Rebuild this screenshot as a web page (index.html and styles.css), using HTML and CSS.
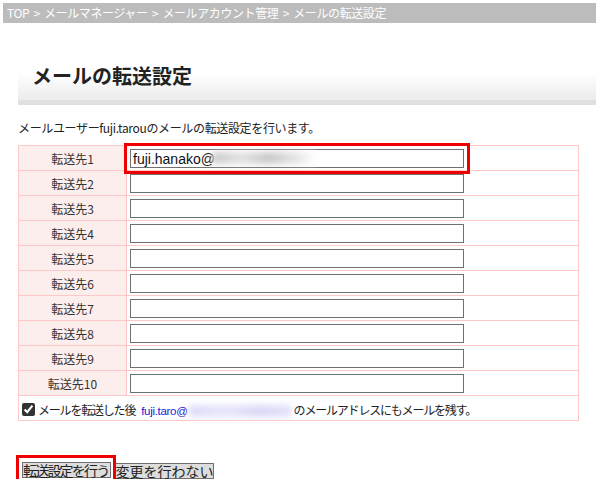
FILE: index.html
```html
<!DOCTYPE html>
<html lang="ja">
<head>
<meta charset="utf-8">
<title>メールの転送設定</title>
<link rel="stylesheet" href="styles.css">
</head>
<body>
<div class="crumb">TOP &gt; メールマネージャー &gt; メールアカウント管理 &gt; メールの転送設定</div>
<div class="head"><h1>メールの転送設定</h1></div>
<p class="desc">メールユーザーfuji.tarouのメールの転送設定を行います。</p>
<table class="fwd">
  <tr><th>転送先1</th><td><span class="hl"><input type="text" value="fuji.hanako@"><span class="blur gray"></span><span class="redbox"></span></span></td></tr>
  <tr><th>転送先2</th><td><input type="text"></td></tr>
  <tr><th>転送先3</th><td><input type="text"></td></tr>
  <tr><th>転送先4</th><td><input type="text"></td></tr>
  <tr><th>転送先5</th><td><input type="text"></td></tr>
  <tr><th>転送先6</th><td><input type="text"></td></tr>
  <tr><th>転送先7</th><td><input type="text"></td></tr>
  <tr><th>転送先8</th><td><input type="text"></td></tr>
  <tr><th>転送先9</th><td><input type="text"></td></tr>
  <tr><th>転送先10</th><td><input type="text"></td></tr>
  <tr><td colspan="2" class="keep"><input type="checkbox" checked><span class="keeptext">メールを転送した後<span class="addr">fuji.taro@</span><span class="blur blue"></span>のメールアドレスにもメールを残す。</span></td></tr>
</table>
<div class="btns">
  <span class="hl"><button type="button" class="go">転送設定を行う</button><span class="redbox"></span></span><button type="button">変更を行わない</button>
</div>
</body>
</html>
```
FILE: styles.css
```css
html, body { margin: 0; padding: 0; background: #fff; }
body { font-family: "Noto Sans CJK JP", "Noto Sans", sans-serif; color: #333; font-size: 12px; }
.crumb {
  margin: 3px 3px 0 3px;
  height: 20px;
  line-height: 20px;
  background: #bcbcbc;
  color: #fff;
  padding-left: 4px;
  font-size: 12px;
  letter-spacing: -0.4px;
  word-spacing: 2px;
  white-space: nowrap;
}
.head {
  margin: 27px 3px 0 18px;
  height: 50px;
  background: linear-gradient(#ffffff 45%, #ececec);
  border-bottom: 5px solid #e0e0e0;
  display: flex;
  align-items: center;
}
.head h1 {
  margin: 0 0 0 14px;
  font-size: 20px;
  font-weight: bold;
  color: #222;
  line-height: 24px;
  position: relative;
  top: 1px;
}
.desc {
  margin: 14px 0 0 18px;
  line-height: 17px;
  font-size: 12px;
  letter-spacing: -0.35px;
  color: #222;
}
.fwd {
  margin: 9px 0 0 18px;
  width: 561px;
  border-collapse: collapse;
}
.fwd th, .fwd td {
  border: 1px solid #ffc8c8;
  height: 24px;
  padding: 0;
}
.fwd th {
  width: 107px;
  background: #fdeeee;
  font-weight: normal;
  font-size: 12px;
  color: #333;
  text-align: center;
}
.fwd td { padding-left: 3px; }
.fwd input[type=text] {
  box-sizing: border-box;
  width: 334px;
  height: 19px;
  border: 1px solid #707070;
  margin: 0;
  padding: 0 2px;
  font-family: "Liberation Sans", Arial, sans-serif;
  font-size: 14px;
  color: #111;
  vertical-align: middle;
  background: #fff;
}
.hl { position: relative; display: inline-block; vertical-align: middle; }
.hl .redbox {
  position: absolute;
  left: -6px; right: -6px; top: -5px; bottom: -6px;
  border: 3px solid #ee0000;
  pointer-events: none;
}
.blur {
  display: inline-block;
  height: 12px;
  filter: blur(3px);
}
.blur.gray {
  position: absolute;
  left: 82px;
  top: 4px;
  width: 104px;
  background: linear-gradient(90deg, #ccc, #e2e2e2 30%, #c8c8c8 55%, #e4e4e4 80%, #fff);
}
.blur.blue {
  width: 103px;
  vertical-align: middle;
  background: linear-gradient(90deg, #dcdcfa, #e6e6fb 40%, #d8d8f8 70%, #e4e4fa);
  margin: 0 2px 0 1px;
}
.keep { padding-left: 5px; white-space: nowrap; }
.keep input {
  width: 13px; height: 13px;
  margin: 0 3px 0 0;
  vertical-align: middle;
  accent-color: #333;
}
.keeptext { vertical-align: middle; font-size: 12px; color: #222; letter-spacing: -1.2px; }
.addr {
  color: #1a1acc;
  font-family: "Liberation Sans", Arial, sans-serif;
  font-size: 11.5px;
  letter-spacing: -0.3px;
  margin-left: 6px;
}
.btns {
  margin: 41px 0 0 22px;
  display: flex;
  align-items: center;
  gap: 3px;
}
.btns button {
  font-family: "Noto Sans CJK JP", sans-serif;
  font-size: 14px;
  line-height: 14px;
  height: 16px;
  padding: 0;
  margin: 0;
  background: #dddddd;
  border: 1px solid #707070;
  color: #222;
  border-radius: 0;
  white-space: nowrap;
}
.btns button.go { letter-spacing: -1.8px; padding-right: 2px; }
.btns .hl .redbox { left: -6px; right: -5px; top: -7px; bottom: -5px; }
```
